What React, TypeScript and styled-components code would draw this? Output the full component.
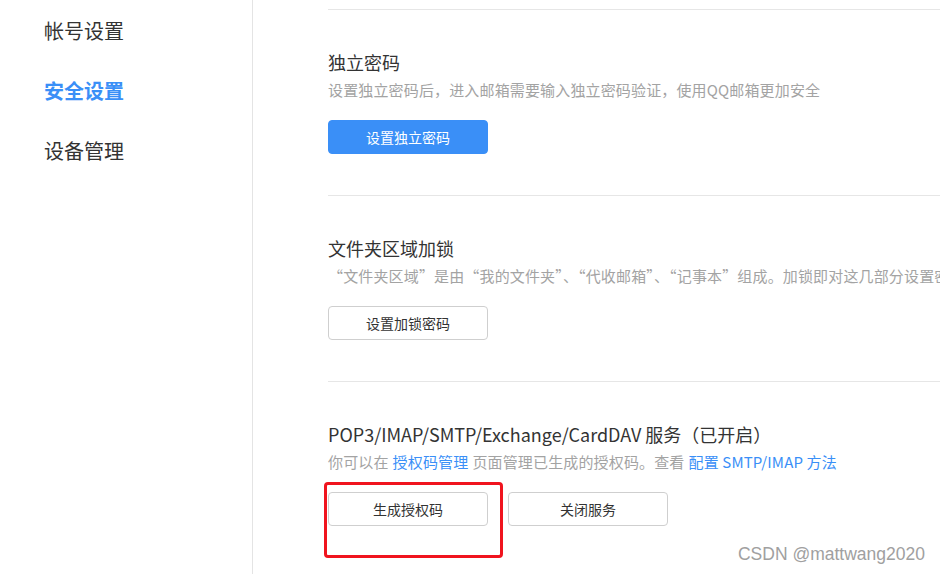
import styled, { createGlobalStyle } from "styled-components";

const GlobalStyle = createGlobalStyle`
  html, body {
    margin: 0;
    padding: 0;
    background: #fff;
  }
  body {
    font-family: "Noto Sans CJK SC", "Noto Sans", "Liberation Sans", sans-serif;
    color: #333;
  }
`;

const Page = styled.div`
  position: relative;
  display: flex;
  width: 940px;
  height: 574px;
  overflow: hidden;
  background: #fff;
`;

const Sidebar = styled.nav`
  flex: 0 0 253px;
  border-right: 1px solid #e4e4e4;
  padding-top: 1px;
  box-sizing: border-box;
`;

const NavItem = styled.div<{ $active?: boolean }>`
  height: 60px;
  line-height: 60px;
  padding-left: 44px;
  font-size: 20px;
  font-weight: ${(p) => (p.$active ? 700 : 400)};
  color: ${(p) => (p.$active ? "#3a8ff7" : "#333")};
`;

const Main = styled.main`
  flex: 1;
  padding: 9px 0 0 75px;
  min-width: 0;
`;

const Section = styled.section`
  position: relative;
  border-top: 1px solid #e6e6e6;
  padding: 40px 0 41px;
  white-space: nowrap;
`;

const Title = styled.h3`
  margin: 0;
  font-size: 18px;
  line-height: 24px;
  font-weight: 400;
  color: #333;
`;

const Desc = styled.p`
  margin: 6px 0 0;
  font-size: 15px;
  line-height: 20px;
  letter-spacing: 0.15px;
  color: #a3a3a3;
`;

const Link = styled.a`
  color: #3a8ff7;
  text-decoration: none;
  margin: 0 4px;
`;

const Actions = styled.div`
  display: flex;
  gap: 20px;
  margin-top: 20px;
`;

const Button = styled.button<{ $primary?: boolean }>`
  width: 160px;
  height: 34px;
  border-radius: 4px;
  font-family: inherit;
  font-size: 14px;
  cursor: pointer;
  box-sizing: border-box;
  border: 1px solid ${(p) => (p.$primary ? "#3a8ff7" : "#cfcfcf")};
  background: ${(p) => (p.$primary ? "#3a8ff7" : "#fff")};
  color: ${(p) => (p.$primary ? "#fff" : "#333")};
`;

const Highlight = styled.div`
  position: absolute;
  left: -4px;
  top: 100px;
  width: 179px;
  height: 76px;
  border: 3px solid #f0141e;
  border-radius: 4px;
  box-sizing: border-box;
`;

const Watermark = styled.div`
  position: absolute;
  right: 15px;
  bottom: 9px;
  font-family: "Liberation Sans", Arial, sans-serif;
  font-size: 17.5px;
  color: #a0a0a0;
`;

export default function App() {
  return (
    <>
      <GlobalStyle />
      <Page>
        <Sidebar>
          <NavItem>帐号设置</NavItem>
          <NavItem $active>安全设置</NavItem>
          <NavItem>设备管理</NavItem>
        </Sidebar>
        <Main>
          <Section>
            <Title>独立密码</Title>
            <Desc>设置独立密码后，进入邮箱需要输入独立密码验证，使用QQ邮箱更加安全</Desc>
            <Actions>
              <Button $primary>设置独立密码</Button>
            </Actions>
          </Section>
          <Section>
            <Title>文件夹区域加锁</Title>
            <Desc>
              “文件夹区域”是由“我的文件夹”、“代收邮箱”、“记事本”组成。加锁即对这几部分设置密码保护
            </Desc>
            <Actions>
              <Button>设置加锁密码</Button>
            </Actions>
          </Section>
          <Section>
            <Title>POP3/IMAP/SMTP/Exchange/CardDAV 服务（已开启）</Title>
            <Desc>
              你可以在<Link>授权码管理</Link>页面管理已生成的授权码。查看
              <Link>配置 SMTP/IMAP 方法</Link>
            </Desc>
            <Actions>
              <Button>生成授权码</Button>
              <Button>关闭服务</Button>
            </Actions>
            <Highlight />
          </Section>
        </Main>
        <Watermark>CSDN @mattwang2020</Watermark>
      </Page>
    </>
  );
}
